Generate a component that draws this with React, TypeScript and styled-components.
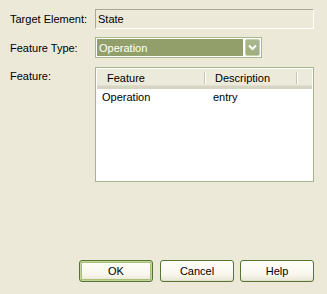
import React from 'react';
import styled, { createGlobalStyle } from 'styled-components';

const GlobalStyle = createGlobalStyle`
  html, body {
    margin: 0;
    padding: 0;
    background: #ece9d8;
  }
  body {
    font-family: "Liberation Sans", Arial, sans-serif;
    font-size: 11px;
    color: #000;
  }
`;

const Dialog = styled.div`
  width: 327px;
  height: 294px;
  box-sizing: border-box;
  padding: 9px 13px 12px 10px;
  display: flex;
  flex-direction: column;
  background: #ece9d8;
`;

const Form = styled.div`
  display: grid;
  grid-template-columns: 85px 1fr;
  grid-template-rows: 20px 21px 115px;
  row-gap: 8px;
  align-items: center;
  & > :nth-child(5),
  & > :nth-child(6) {
    margin-top: 2px;
  }
`;

const Label = styled.div<{ $top?: boolean }>`
  align-self: ${props => (props.$top ? 'start' : 'center')};
  padding-top: ${props => (props.$top ? '2px' : '0')};
  white-space: nowrap;
`;

const ReadOnlyField = styled.div`
  height: 20px;
  box-sizing: border-box;
  border-top: 1px solid #aca899;
  border-left: 1px solid #aca899;
  border-right: 1px solid #ffffff;
  border-bottom: 1px solid #ffffff;
  padding-left: 2px;
  display: flex;
  align-items: center;
`;

const Combo = styled.div`
  width: 167px;
  height: 21px;
  box-sizing: border-box;
  border: 1px solid #a5b98d;
  background: #ffffff;
  padding: 1px;
  display: flex;
  align-items: stretch;
  gap: 2px;
`;

const ComboValue = styled.div`
  flex: 1;
  background: #939f6b;
  color: #ffffff;
  padding-left: 2px;
  display: flex;
  align-items: center;
`;

const DropButton = styled.div`
  width: 15px;
  box-sizing: border-box;
  border: 1px solid #c3ceaa;
  border-radius: 2px;
  background: linear-gradient(#a9b88a, #9fae7d);
  display: flex;
  align-items: center;
  justify-content: center;
`;

const List = styled.div`
  height: 115px;
  box-sizing: border-box;
  border: 1px solid #a5b58d;
  background: #ffffff;
  padding: 1px;
  display: flex;
  flex-direction: column;
`;

const HeaderRow = styled.div`
  display: flex;
  height: 20px;
  box-sizing: border-box;
  background: #ebeadb;
  border-bottom: 3px solid #d8d4c4;
  box-shadow: inset 0 -1px 0 #e2dfd0;
`;

const HeaderCell = styled.div<{ $width?: number }>`
  position: relative;
  width: ${props => (props.$width ? `${props.$width}px` : 'auto')};
  flex: ${props => (props.$width ? 'none' : '1')};
  padding-left: ${props => (props.$width ? '10px' : '0')};
  box-sizing: border-box;
  display: flex;
  align-items: center;
  &::after {
    content: '';
    display: ${props => (props.$width ? 'block' : 'none')};
    position: absolute;
    right: 0;
    top: 3px;
    bottom: 2px;
    width: 1px;
    background: #c7c5b2;
    box-shadow: 1px 0 0 #ffffff;
  }
`;

const DataRow = styled.div`
  display: flex;
  height: 16px;
  align-items: center;
`;

const DataCell = styled.div<{ $width?: number }>`
  width: ${props => (props.$width ? `${props.$width}px` : 'auto')};
  flex: ${props => (props.$width ? 'none' : '1')};
  padding-left: 5px;
  box-sizing: border-box;
`;

const ButtonRow = styled.div`
  margin-top: auto;
  display: flex;
  justify-content: flex-end;
`;

const Button = styled.button<{ $default?: boolean; $space?: number }>`
  width: 74px;
  height: 22px;
  margin-left: ${props => props.$space ?? 0}px;
  box-sizing: border-box;
  border: 1px solid #567534;
  border-radius: 3px;
  background: linear-gradient(#fffffb 0%, #f8f6ec 70%, #e8e4d1 100%);
  box-shadow: ${props =>
    props.$default
      ? 'inset 0 0 0 1px #c2d59a, inset 0 0 0 2px #a8c176'
      : 'inset 0 -1px 0 #e2dec9'};
  font-family: "Liberation Sans", Arial, sans-serif;
  font-size: 11px;
  color: #000;
  padding: 0;
  cursor: pointer;
`;

const Chevron: React.FC = () => (
  <svg width="9" height="7" viewBox="0 0 9 7">
    <path d="M1 1.5 L4.5 5 L8 1.5" fill="none" stroke="#ffffff" strokeWidth="2" />
  </svg>
);

const App: React.FC = () => {
  return (
    <>
      <GlobalStyle />
      <Dialog>
        <Form>
          <Label>Target Element:</Label>
          <ReadOnlyField>State</ReadOnlyField>

          <Label>Feature Type:</Label>
          <Combo>
            <ComboValue>Operation</ComboValue>
            <DropButton>
              <Chevron />
            </DropButton>
          </Combo>

          <Label $top>Feature:</Label>
          <List>
            <HeaderRow>
              <HeaderCell $width={108}>Feature</HeaderCell>
              <HeaderCell $width={92}>Description</HeaderCell>
              <HeaderCell />
            </HeaderRow>
            <DataRow>
              <DataCell $width={111}>Operation</DataCell>
              <DataCell>entry</DataCell>
            </DataRow>
          </List>
        </Form>

        <ButtonRow>
          <Button $default>OK</Button>
          <Button $space={7}>Cancel</Button>
          <Button $space={6}>Help</Button>
        </ButtonRow>
      </Dialog>
    </>
  );
};

export default App;
